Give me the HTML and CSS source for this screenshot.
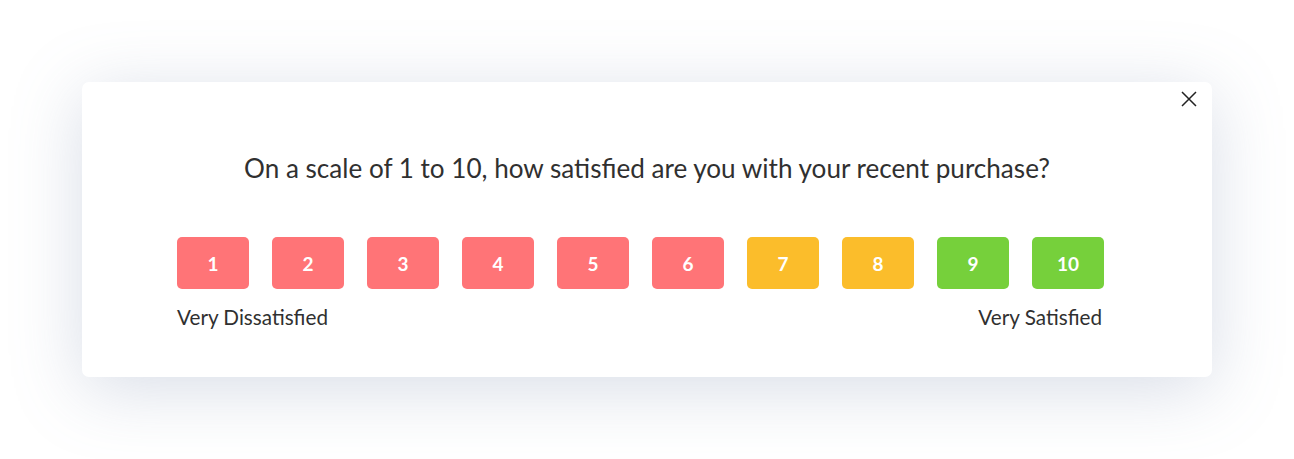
FILE: index.html
```html
<!DOCTYPE html>
<html lang="en">
<head>
    <meta charset="UTF-8">
    <title>Satisfaction Survey</title>
    <link rel="stylesheet" href="styles.css">
</head>
<body>

    <section class="survey-card">
        <!-- Close icon -->
        <button class="survey-close" aria-label="Close">
            <svg width="16" height="16" viewBox="0 0 16 16">
                <path d="M1 1 L15 15 M15 1 L1 15" stroke="#222" stroke-width="1.5" fill="none"/>
            </svg>
        </button>

        <h2 class="survey-question">On a scale of 1 to 10, how satisfied are you with your recent purchase?</h2>

        <div class="survey-scale">
            <div class="scale-buttons">
                <button class="score bad">1</button>
                <button class="score bad">2</button>
                <button class="score bad">3</button>
                <button class="score bad">4</button>
                <button class="score bad">5</button>
                <button class="score bad">6</button>
                <button class="score ok">7</button>
                <button class="score ok">8</button>
                <button class="score good">9</button>
                <button class="score good">10</button>
            </div>
            <div class="scale-labels">
                <span>Very Dissatisfied</span>
                <span>Very Satisfied</span>
            </div>
        </div>
    </section>

</body>
</html>
```

FILE: styles.css
```css
body {
    margin: 0;
    min-height: 100vh;
    background: #fff;
    font-family: Lato, "Open Sans", sans-serif;
    color: #303030;
    overflow: hidden;
}

/* Card with the soft bluish shadow */
.survey-card {
    position: relative;
    box-sizing: border-box;
    width: 1130px;
    height: 295px;
    margin: 82px 0 0 82px;
    padding: 71px 0 0 95px;
    background: #fff;
    border-radius: 7px;
    box-shadow: 0 12px 70px rgba(110, 130, 165, 0.27);
}

.survey-close {
    position: absolute;
    top: 9px;
    right: 15px;
    padding: 0;
    border: 0;
    background: none;
    cursor: pointer;
}

.survey-question {
    margin: 0 0 54px -95px;
    font-size: 26.1px;
    line-height: 30px;
    font-weight: 400;
    text-align: center;
}

.survey-scale {
    width: 927px;
}

.scale-buttons {
    display: flex;
    gap: 23px;
}

.score {
    width: 72px;
    height: 52px;
    border: 0;
    border-radius: 5px;
    color: #fff;
    font-family: inherit;
    font-size: 19px;
    font-weight: 700;
    cursor: pointer;
}

.score.bad { background: #ff7477; }
.score.ok { background: #fbbd2b; }
.score.good { background: #76d03b; }

.scale-labels {
    display: flex;
    justify-content: space-between;
    margin-top: 16px;
    padding-right: 2px;
    font-size: 20.7px;
    line-height: 24px;
}
```
